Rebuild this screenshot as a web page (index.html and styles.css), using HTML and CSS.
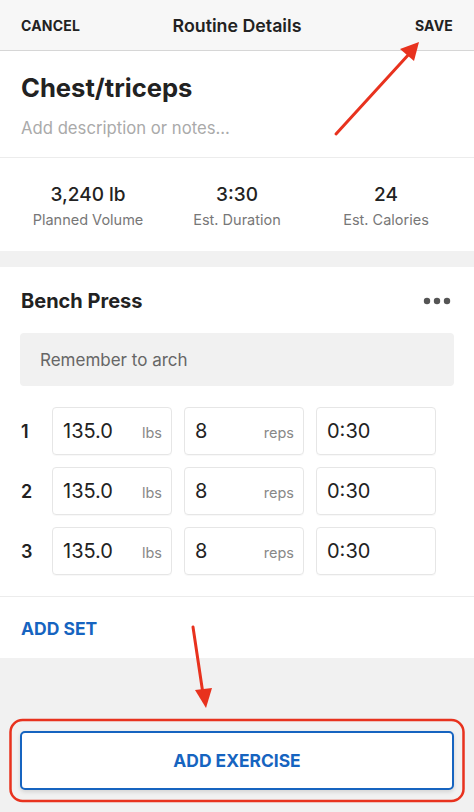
FILE: index.html
```html
<!DOCTYPE html>
<html lang="en">
<head>
<meta charset="utf-8">
<title>Routine Details</title>
<link rel="stylesheet" href="styles.css">
</head>
<body>
<div class="screen">
  <header class="topbar">
    <span class="topbar-btn left">CANCEL</span>
    <span class="topbar-title">Routine Details</span>
    <span class="topbar-btn right">SAVE</span>
  </header>

  <section class="intro">
    <h1 class="routine-name">Chest/triceps</h1>
    <p class="routine-notes">Add description or notes...</p>
  </section>

  <section class="stats">
    <div class="stat">
      <div class="stat-value">3,240 lb</div>
      <div class="stat-label">Planned Volume</div>
    </div>
    <div class="stat">
      <div class="stat-value">3:30</div>
      <div class="stat-label">Est. Duration</div>
    </div>
    <div class="stat">
      <div class="stat-value">24</div>
      <div class="stat-label">Est. Calories</div>
    </div>
  </section>

  <div class="band"></div>

  <section class="exercise">
    <div class="exercise-head">
      <h2 class="exercise-name">Bench Press</h2>
      <svg class="more" width="30" height="8" viewBox="0 0 30 8" aria-hidden="true">
        <circle cx="4" cy="4" r="3.2" fill="#555"/>
        <circle cx="14" cy="4" r="3.2" fill="#555"/>
        <circle cx="24" cy="4" r="3.2" fill="#555"/>
      </svg>
    </div>
    <div class="exercise-notes">Remember to arch</div>

    <div class="sets">
      <div class="set-row">
        <span class="set-num">1</span>
        <div class="field"><span class="val">135.0</span><span class="unit">lbs</span></div>
        <div class="field"><span class="val">8</span><span class="unit">reps</span></div>
        <div class="field"><span class="val">0:30</span></div>
      </div>
      <div class="set-row">
        <span class="set-num">2</span>
        <div class="field"><span class="val">135.0</span><span class="unit">lbs</span></div>
        <div class="field"><span class="val">8</span><span class="unit">reps</span></div>
        <div class="field"><span class="val">0:30</span></div>
      </div>
      <div class="set-row">
        <span class="set-num">3</span>
        <div class="field"><span class="val">135.0</span><span class="unit">lbs</span></div>
        <div class="field"><span class="val">8</span><span class="unit">reps</span></div>
        <div class="field"><span class="val">0:30</span></div>
      </div>
    </div>

    <div class="add-set">ADD SET</div>
  </section>

  <section class="footer">
    <div class="add-exercise">ADD EXERCISE</div>
  </section>

  <svg class="annotations" width="474" height="812" viewBox="0 0 474 812" aria-hidden="true">
    <line x1="336" y1="134" x2="410" y2="53" stroke="#e8321e" stroke-width="3" stroke-linecap="round"/>
    <polygon points="419,42 414,61 400,49" fill="#e8321e"/>
    <line x1="193" y1="627" x2="203" y2="694" stroke="#e8321e" stroke-width="3" stroke-linecap="round"/>
    <polygon points="206,708 195,690 212,688" fill="#e8321e"/>
    <rect x="10.5" y="720" width="453" height="81" rx="12" ry="12" fill="none" stroke="#e8321e" stroke-width="2.5"/>
  </svg>
</div>
</body>
</html>
```

FILE: styles.css
```css
* { box-sizing: border-box; }

html, body {
  margin: 0;
  padding: 0;
  background: #ffffff;
}

body {
  font-family: Inter, "Noto Sans", "Liberation Sans", sans-serif;
  color: #222;
}

.screen {
  position: relative;
  width: 474px;
  height: 812px;
  overflow: hidden;
  display: flex;
  flex-direction: column;
}

.topbar {
  height: 51px;
  flex: none;
  background: #f7f7f7;
  border-bottom: 1px solid #d6d6d6;
  display: grid;
  grid-template-columns: 1fr auto 1fr;
  align-items: center;
  padding: 0 21px;
}

.topbar-btn {
  font-size: 14px;
  font-weight: 700;
  color: #222;
  letter-spacing: 0.2px;
}

.topbar-btn.right { justify-self: end; }

.topbar-title {
  font-size: 17.8px;
  font-weight: 600;
  color: #222;
}

.intro {
  padding: 22px 21px 19px;
  border-bottom: 1px solid #ececec;
}

.routine-name {
  margin: 0;
  font-size: 25.6px;
  line-height: 30px;
  font-weight: 700;
  color: #222;
}

.routine-notes {
  margin: 15px 0 0;
  font-size: 16.7px;
  line-height: 20px;
  color: #aaa;
}

.stats {
  display: grid;
  grid-template-columns: repeat(3, 1fr);
  padding: 25px 13.5px 21px;
  text-align: center;
}

.stat-value {
  font-size: 19px;
  line-height: 24px;
  font-weight: 500;
  color: #222;
}

.stat-label {
  margin-top: 3px;
  font-size: 14.5px;
  line-height: 20px;
  color: #777;
}

.band {
  height: 16px;
  flex: none;
  background: #f1f1f1;
}

.exercise {
  background: #fff;
  padding: 21px 0 19px;
}

.exercise-head {
  display: flex;
  justify-content: space-between;
  align-items: center;
  padding: 0 21px 0 21px;
  height: 26px;
}

.exercise-name {
  margin: 0;
  font-size: 20px;
  font-weight: 700;
  color: #222;
}

.exercise-notes {
  margin: 19px 20px 0;
  height: 53px;
  background: #f1f1f1;
  border-radius: 4px;
  padding: 0 20px;
  display: flex;
  align-items: center;
  font-size: 17px;
  color: #666;
}

.sets {
  margin-top: 21px;
  padding: 0 0 21px 20px;
  display: flex;
  flex-direction: column;
  gap: 12px;
  border-bottom: 1px solid #ececec;
}

.set-row {
  display: grid;
  grid-template-columns: 20px 120px 120px 120px;
  column-gap: 12px;
  height: 48px;
  align-items: center;
}

.set-row .set-num {
  padding-left: 1px;
  font-size: 18px;
  font-weight: 600;
  color: #222;
}

.field {
  height: 48px;
  border: 1px solid #e6e6e6;
  border-radius: 4px;
  box-shadow: 0 1px 1px rgba(0,0,0,0.03);
  display: flex;
  align-items: center;
  justify-content: space-between;
  padding: 0 9px 0 10px;
}

.val {
  font-size: 20px;
  color: #222;
}

.unit {
  font-size: 14.5px;
  color: #888;
  padding-top: 2px;
}

.add-set {
  padding: 22px 21px 0;
  font-size: 17.5px;
  line-height: 20px;
  font-weight: 700;
  color: #1664c0;
}

.footer {
  flex: 1;
  background: #f1f1f1;
  padding: 73px 20px 0;
}

.add-exercise {
  height: 59px;
  background: #fff;
  border: 2px solid #1664c0;
  border-radius: 5px;
  box-shadow: 0 2px 4px rgba(0,0,0,0.12);
  display: flex;
  align-items: center;
  justify-content: center;
  font-size: 17.4px;
  font-weight: 700;
  color: #1664c0;
}

.annotations {
  position: absolute;
  left: 0;
  top: 0;
  pointer-events: none;
}
```
